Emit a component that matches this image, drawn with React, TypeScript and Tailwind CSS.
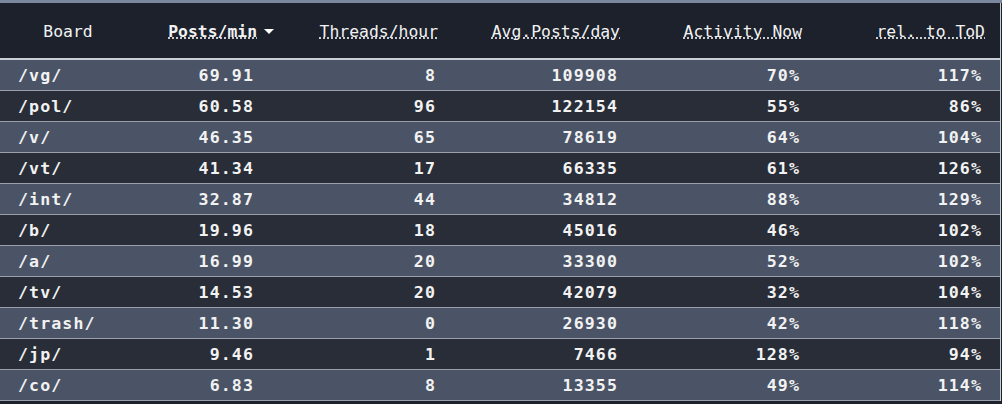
import { FC } from 'react';

interface BoardRow {
  board: string;
  ppm: string;
  tph: number;
  avg: number;
  now: string;
  rel: string;
}

const rows: BoardRow[] = [
  { board: '/vg/', ppm: '69.91', tph: 8, avg: 109908, now: '70%', rel: '117%' },
  { board: '/pol/', ppm: '60.58', tph: 96, avg: 122154, now: '55%', rel: '86%' },
  { board: '/v/', ppm: '46.35', tph: 65, avg: 78619, now: '64%', rel: '104%' },
  { board: '/vt/', ppm: '41.34', tph: 17, avg: 66335, now: '61%', rel: '126%' },
  { board: '/int/', ppm: '32.87', tph: 44, avg: 34812, now: '88%', rel: '129%' },
  { board: '/b/', ppm: '19.96', tph: 18, avg: 45016, now: '46%', rel: '102%' },
  { board: '/a/', ppm: '16.99', tph: 20, avg: 33300, now: '52%', rel: '102%' },
  { board: '/tv/', ppm: '14.53', tph: 20, avg: 42079, now: '32%', rel: '104%' },
  { board: '/trash/', ppm: '11.30', tph: 0, avg: 26930, now: '42%', rel: '118%' },
  { board: '/jp/', ppm: '9.46', tph: 1, avg: 7466, now: '128%', rel: '94%' },
  { board: '/co/', ppm: '6.83', tph: 8, avg: 13355, now: '49%', rel: '114%' },
];

const cols = 'grid grid-cols-[136px_137px_182px_182px_182px_182px]';

const App: FC = () => (
  <div className="h-[404px] w-[1002px] overflow-hidden bg-[#1c212c] font-['DejaVu_Sans_Mono',monospace] text-[#f2f2f2]">
    <div className="h-[3px] bg-[#7b879e]" />
    <div className="w-[1001px] border-r border-[#c9ced6]">
      <div className={`${cols} h-[57px] items-center border-b-2 border-[#c9ced6] bg-[#1c212c] pt-[3px] text-[16.4px]`}>
        <div className="text-center">Board</div>
        <div className="flex items-center justify-end">
          <abbr title="Posts per minute" className="font-bold">Posts/min</abbr>
          <span className="ml-[7px] mr-[-1px] h-0 w-0 border-x-[5.5px] border-t-[5px] border-x-transparent border-t-white" />
        </div>
        <div className="pr-[17px] text-right">
          <abbr title="Threads per hour">Threads/hour</abbr>
        </div>
        <div className="pr-[17px] text-right">
          <abbr title="Average posts per day">Avg.Posts/day</abbr>
        </div>
        <div className="pr-[17px] text-right">
          <abbr title="Activity now">Activity Now</abbr>
        </div>
        <div className="pr-[16px] text-right">
          <abbr title="Relative to time of day">rel. to ToD</abbr>
        </div>
      </div>

      {rows.map((row, i) => (
        <div
          key={row.board}
          className={`${cols} h-[31px] items-center border-b border-[#9aa1ad] pt-[2px] text-[16.6px] font-bold tracking-[1.1px] ${
            i % 2 === 0 ? 'bg-[#4a5466]' : 'bg-[#282d37]'
          }`}
        >
          <div className="pl-[18px]">{row.board}</div>
          <div className="pr-[19px] text-right">{row.ppm}</div>
          <div className="pr-[19px] text-right">{row.tph}</div>
          <div className="pr-[19px] text-right">{row.avg}</div>
          <div className="pr-[19px] text-right">{row.now}</div>
          <div className="pr-[19px] text-right">{row.rel}</div>
        </div>
      ))}
    </div>
  </div>
);

export default App;
